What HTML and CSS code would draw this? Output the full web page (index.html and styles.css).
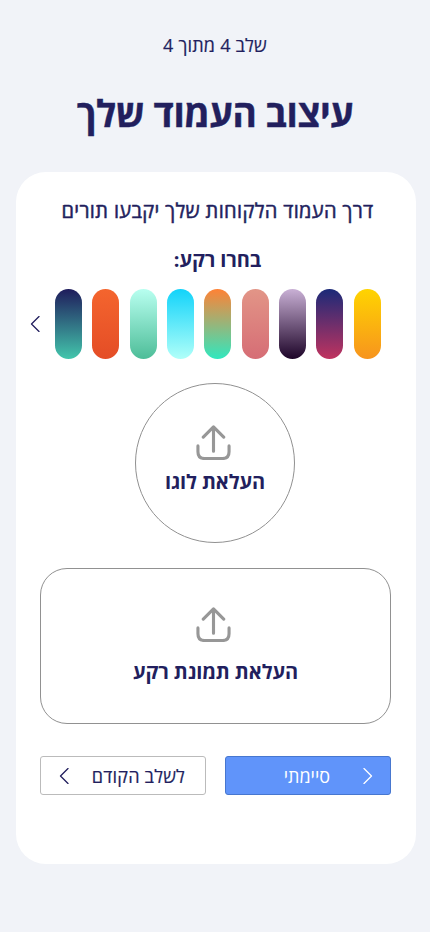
FILE: index.html
```html
<!DOCTYPE html>
<html lang="he" dir="rtl">
<head>
<meta charset="utf-8">
<title>עיצוב העמוד שלך</title>
<link rel="stylesheet" href="styles.css">
</head>
<body>
<header class="header">
  <p class="step">שלב 4 מתוך 4</p>
  <h1 class="title">עיצוב העמוד שלך</h1>
</header>
<main class="card">
  <p class="lead">דרך העמוד הלקוחות שלך יקבעו תורים</p>
  <h2 class="choose">בחרו רקע:</h2>
  <div class="swatches">
    <button class="swatch gold"></button>
    <button class="swatch berry"></button>
    <button class="swatch plum"></button>
    <button class="swatch rose"></button>
    <button class="swatch sunset"></button>
    <button class="swatch sky"></button>
    <button class="swatch mint"></button>
    <button class="swatch fire"></button>
    <button class="swatch ocean"></button>
    <svg class="more" viewBox="0 0 10 16"><path d="M9 .5 1.500 8 9 15.500"/></svg>
  </div>
  <button class="upload logo">
    <svg class="icon" viewBox="0 0 36 36"><path d="M18 27V2M7.500 12.500 18 2l10.500 10.500M2 21.500v6q0 7 7 7h18q7 0 7-7v-6"/></svg>
    <span>העלאת לוגו</span>
  </button>
  <button class="upload photo">
    <svg class="icon" viewBox="0 0 36 36"><path d="M18 27V2M7.500 12.500 18 2l10.500 10.500M2 21.500v6q0 7 7 7h18q7 0 7-7v-6"/></svg>
    <span>העלאת תמונת רקע</span>
  </button>
  <div class="actions">
    <button class="btn done"><svg class="chev" viewBox="0 0 10 16"><path d="M1 .5 8.500 8 1 15.500"/></svg><span>סיימתי</span></button>
    <button class="btn back"><span>לשלב הקודם</span><svg class="chev" viewBox="0 0 10 16"><path d="M9 .5 1.500 8 9 15.500"/></svg></button>
  </div>
</main>
</body>
</html>
```
FILE: styles.css
```css
* { box-sizing: border-box; }
body { margin: 0; height: 932px; background: #f1f3f8; color: #221f5e; font-family: "Open Sans", sans-serif; overflow: hidden; }
h1, h2, p { margin: 0; }
button { font: inherit; color: inherit; padding: 0; margin: 0; background: none; border: 0; }
svg { fill: none; stroke: currentColor; stroke-linecap: round; stroke-linejoin: round; }
.header { height: 172px; text-align: center; padding-top: 33px; }
.step { font-size: 18px; line-height: 24px; letter-spacing: .2px; -webkit-text-stroke: .2px; }
.title { font-size: 37px; line-height: 48px; font-weight: 700; margin-top: 32px; letter-spacing: -.4px; -webkit-text-stroke: .4px; }
.card { width: 400px; height: 692px; margin: 0 14px 0 auto; background: #fff; border-radius: 30px; padding: 26px 25px 0 24px; text-align: center; }
.lead { font-size: 20px; line-height: 26px; letter-spacing: .36px; padding-left: 4px; -webkit-text-stroke: .5px; white-space: nowrap; }
.choose { font-size: 20px; line-height: 26px; margin-top: 23px; padding-left: 4px; letter-spacing: -.1px; }
.swatches { display: flex; align-items: center; gap: 10.300px; height: 70px; margin-top: 16px; padding-right: 10.500px; }
.swatch { width: 27px; height: 70px; border-radius: 14px; flex: none; }
.gold { background: linear-gradient(#ffd400, #f7941e); }
.berry { background: linear-gradient(#1b2a78, #c0335f); }
.plum { background: linear-gradient(#c9b0d5, #1d0428); }
.rose { background: linear-gradient(#e29587, #d66d75); }
.sunset { background: linear-gradient(#ff8235, #30e8bf); }
.sky { background: linear-gradient(#12d3fa, #b0fff9); }
.mint { background: linear-gradient(#b8fff0, #4dbd98); }
.fire { background: linear-gradient(#f4652e, #e44d26); }
.ocean { background: linear-gradient(#1f1c5c, #43c6ac); }
.more { width: 10px; height: 16px; stroke-width: 1.3; flex: none; margin-right: 5px; }
.upload { display: flex; flex-direction: column; align-items: center; border: 1px solid #919191; font-size: 20px; line-height: 26px; font-weight: 700; }
.upload span { letter-spacing: -.1px; }
.icon { width: 35px; height: 35px; stroke: #979797; stroke-width: 3.200; margin-right: -4px; }
.logo { width: 160px; height: 160px; border-radius: 50%; margin: 24px 96px 0 0; padding-top: 41px; }
.logo .icon { margin-right: 3px; }
.logo span { margin-top: 9px; }
.photo { width: 351px; height: 156px; border-radius: 27px; margin-top: 25px; padding-top: 38px; }
.photo .icon { margin-right: 4px; }
.photo span { margin-top: 17px; }
.actions { display: flex; justify-content: space-between; margin-top: 32px; }
.btn { width: 166px; height: 39px; border-radius: 3px; font-size: 18px; border: 1px solid #bbb; display: flex; align-items: center; }
.chev { width: 10px; height: 16px; stroke-width: 1.3; }
.done { background: #6094fa; border-color: #4777cf; color: #fff; padding-right: 17px; gap: 33px; }
.back { padding-right: 20px; gap: 23px; }
.back span { letter-spacing: .2px; -webkit-text-stroke: .2px; }
```
